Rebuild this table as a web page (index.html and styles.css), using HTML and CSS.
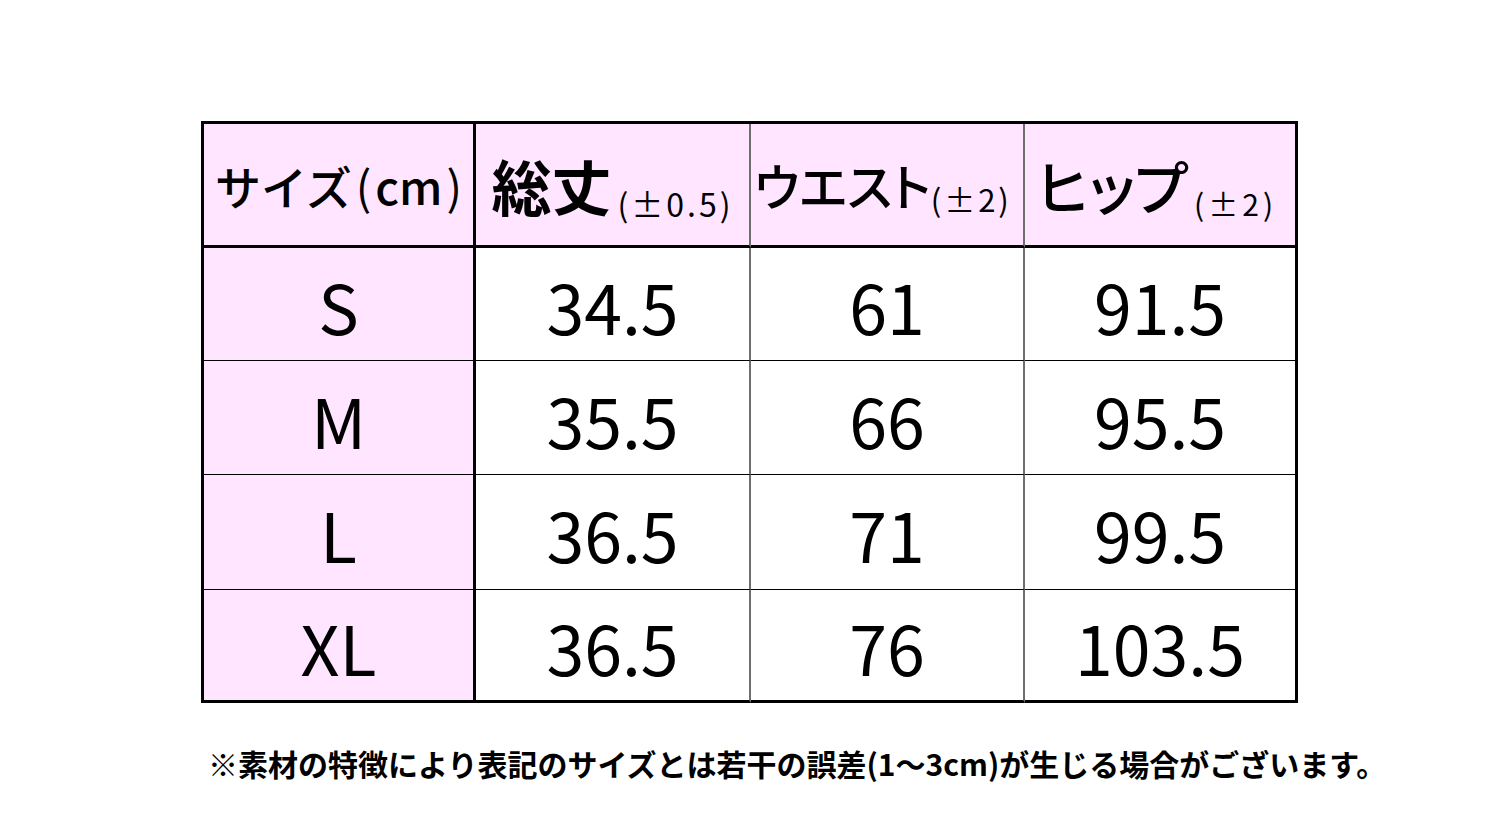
FILE: index.html
```html
<!DOCTYPE html>
<html lang="ja">
<head>
<meta charset="utf-8">
<title>サイズ表</title>
<link rel="stylesheet" href="styles.css">
</head>
<body>
<div class="page">
  <table class="size-table">
    <thead>
      <tr class="head-row">
        <th class="c1"><span class="h-size">サイズ<span class="h-paren">(</span>cm<span class="h-paren">)</span></span></th>
        <th class="c2"><span class="h-big">総丈</span><span class="h-tol tol-a">(±0.5)</span></th>
        <th class="c3"><span class="h-mid">ウエスト</span><span class="h-tol tol-b">(±2)</span></th>
        <th class="c4"><span class="h-hip">ヒップ</span><span class="h-tol tol-c">(±2)</span></th>
      </tr>
    </thead>
    <tbody>
      <tr class="r1"><th class="c1">S</th><td class="c2">34.5</td><td class="c3">61</td><td class="c4">91.5</td></tr>
      <tr class="r2"><th class="c1">M</th><td class="c2">35.5</td><td class="c3">66</td><td class="c4">95.5</td></tr>
      <tr class="r3"><th class="c1">L</th><td class="c2">36.5</td><td class="c3">71</td><td class="c4">99.5</td></tr>
      <tr class="r4"><th class="c1">XL</th><td class="c2">36.5</td><td class="c3">76</td><td class="c4">103.5</td></tr>
    </tbody>
  </table>
  <p class="note">※素材の特徴により表記のサイズとは若干の誤差<span class="np">(</span>1～3cm<span class="np">)</span>が生じる場合がございます。</p>
</div>
</body>
</html>
```
FILE: styles.css
```css
html, body {
  margin: 0;
  padding: 0;
  background: #ffffff;
}
body {
  width: 1500px;
  height: 827px;
  overflow: hidden;
  font-family: "Noto Sans CJK JP", "Noto Sans", sans-serif;
  color: #000;
}
.page {
  padding: 121px 0 0 201px;
}
.size-table {
  border-collapse: separate;
  border-spacing: 0;
  table-layout: fixed;
  border-top: 3px solid #000;
  border-left: 3px solid #000;
}
.size-table th,
.size-table td {
  padding: 0;
  text-align: center;
  vertical-align: middle;
  font-weight: 400;
  border-right: 2px solid #6e6e6e;
  border-bottom: 1px solid #000;
  overflow: visible;
  white-space: nowrap;
}
.size-table .c1 { width: 269px; border-right: 3px solid #000; background: #ffe5ff; }
.size-table .c2 { width: 273px; }
.size-table .c3 { width: 272px; }
.size-table .c4 { width: 270px; border-right: 3px solid #000; }
.size-table .head-row th { background: #ffe5ff; height: 121px; border-bottom: 3px solid #000; }
.size-table .r1 > * { height: 108px; }
.size-table .r2 > * { height: 109px; }
.size-table .r3 > * { height: 110px; }
.size-table .r4 > * { height: 106px; border-bottom: 3px solid #000; }

.size-table tbody th,
.size-table tbody td {
  font-size: 68px;
  line-height: 1;
  padding-top: 4px;
}

.h-size {
  font-size: 46px;
  font-weight: 500;
  margin-left: 4px;
}
.h-paren { font-weight: 400; margin: 0 4px; }
.h-big {
  font-size: 60px;
  font-weight: 700;
}
.h-mid {
  font-size: 50px;
  font-weight: 500;
  font-feature-settings: "palt";
  margin-left: -8px;
}
.h-hip {
  font-size: 58px;
  font-weight: 500;
  font-feature-settings: "palt";
  margin-left: -6px;
}
.h-tol {
  font-size: 32px;
  font-weight: 400;
  vertical-align: -6px;
}
.tol-a { letter-spacing: 3px; margin-left: 6px; font-feature-settings: "palt"; }
.tol-b { font-size: 31px; letter-spacing: 3px; font-feature-settings: "palt"; }
.tol-c { font-size: 30px; letter-spacing: 4px; margin-left: 6px; font-feature-settings: "palt"; }

.note {
  margin: 42px 0 0 7px;
  font-size: 30px;
  font-weight: 700;
  line-height: 1.2;
  white-space: nowrap;
}
.np { font-weight: 700; }
```
